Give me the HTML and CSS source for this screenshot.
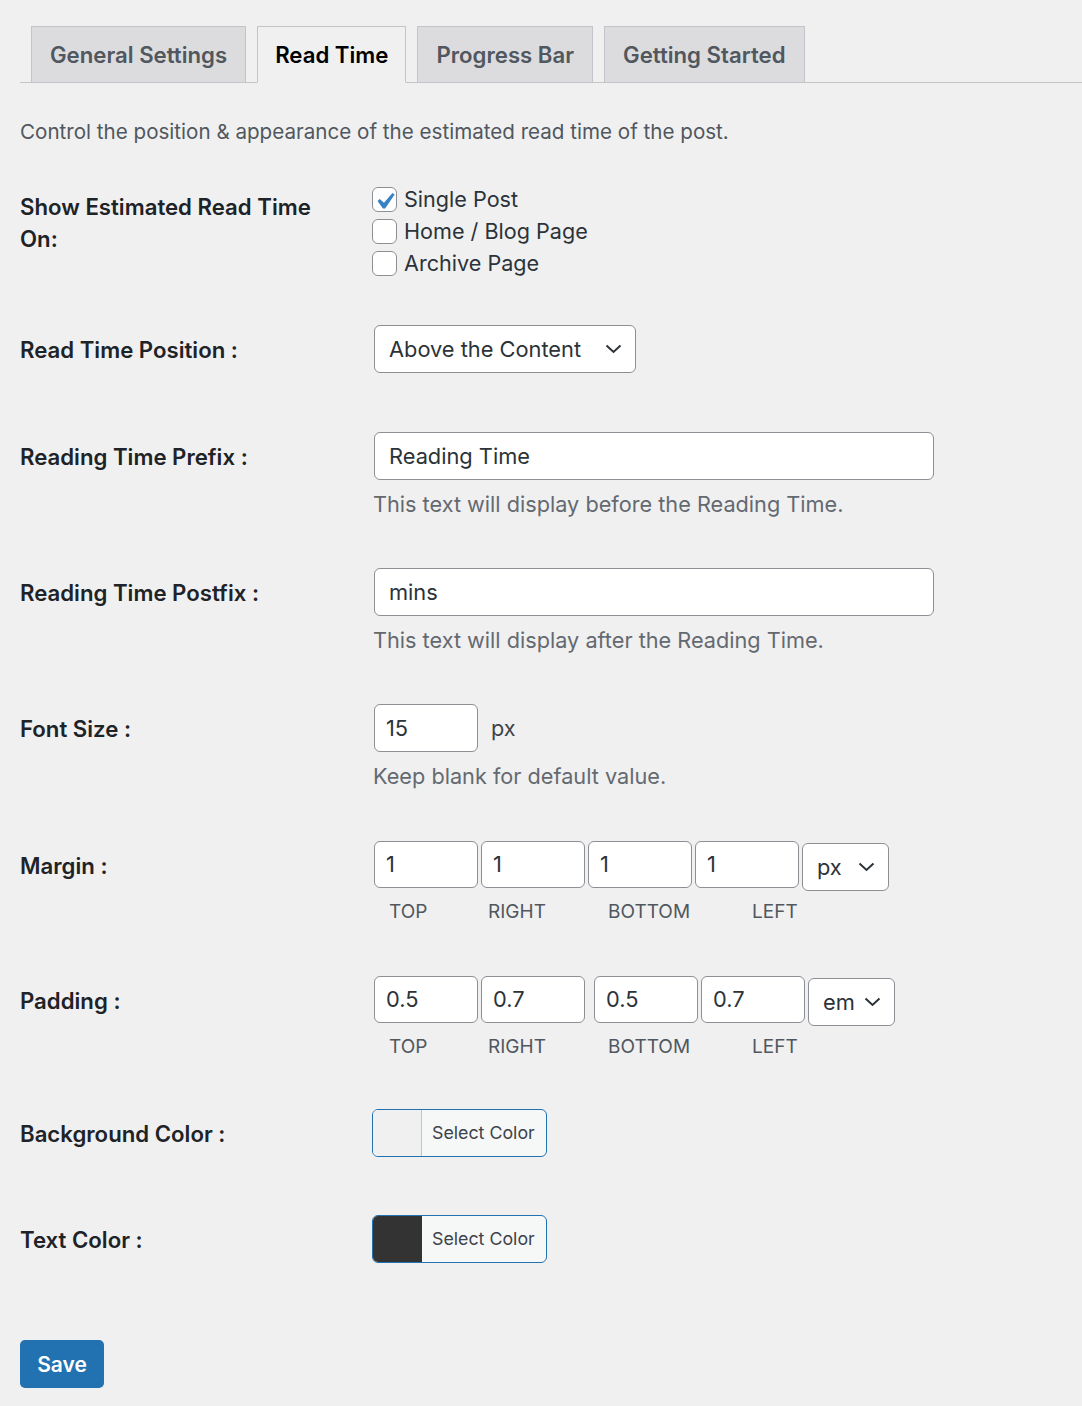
FILE: index.html
```html
<!DOCTYPE html>
<html lang="en">
<head>
<meta charset="utf-8">
<title>Read Time Settings</title>
<link rel="stylesheet" href="styles.css">
</head>
<body>
<div class="wrap">
  <nav class="tabs">
    <a class="tab">General Settings</a>
    <a class="tab active">Read Time</a>
    <a class="tab">Progress Bar</a>
    <a class="tab">Getting Started</a>
  </nav>

  <p class="intro">Control the position &amp; appearance of the estimated read time of the post.</p>

  <div class="form">
    <div class="row row-first">
      <div class="label label-multi">Show Estimated Read Time On:</div>
      <div class="field checks">
        <label class="check"><span class="box"><svg class="tick" viewBox="0 0 20 20"><path d="M14.83 4.89l1.34.94-5.81 8.38H9.02L5.78 9.67l1.34-1.25 2.57 2.4z" fill="#3582c4"/></svg></span>Single Post</label>
        <label class="check"><span class="box"></span>Home / Blog Page</label>
        <label class="check"><span class="box"></span>Archive Page</label>
      </div>
    </div>

    <div class="row row-loose">
      <div class="label">Read Time Position :</div>
      <div class="field">
        <div class="select select-wide">
          <span>Above the Content</span>
          <svg class="chev" viewBox="0 0 17 10"><polyline points="1.5,1.5 8.5,8 15.5,1.5" fill="none" stroke="#2c3338" stroke-width="2"/></svg>
        </div>
      </div>
    </div>

    <div class="row">
      <div class="label">Reading Time Prefix :</div>
      <div class="field">
        <div class="input input-wide">Reading Time</div>
        <p class="desc">This text will display before the Reading Time.</p>
      </div>
    </div>

    <div class="row">
      <div class="label">Reading Time Postfix :</div>
      <div class="field">
        <div class="input input-wide">mins</div>
        <p class="desc">This text will display after the Reading Time.</p>
      </div>
    </div>

    <div class="row row-wide">
      <div class="label">Font Size :</div>
      <div class="field">
        <div class="inline">
          <div class="input input-num">15</div>
          <span class="unit">px</span>
        </div>
        <p class="desc">Keep blank for default value.</p>
      </div>
    </div>

    <div class="row">
      <div class="label">Margin :</div>
      <div class="field">
        <div class="quad">
          <div class="input input-small">1</div>
          <div class="input input-small">1</div>
          <div class="input input-small">1</div>
          <div class="input input-small">1</div>
          <div class="select select-unit">
            <span>px</span>
            <svg class="chev" viewBox="0 0 17 10"><polyline points="1.5,1.5 8.5,8 15.5,1.5" fill="none" stroke="#2c3338" stroke-width="2"/></svg>
          </div>
        </div>
        <div class="sides">
          <span class="side side-top">TOP</span><span class="side side-right">RIGHT</span><span class="side side-bottom">BOTTOM</span><span class="side">LEFT</span>
        </div>
      </div>
    </div>

    <div class="row row-tight">
      <div class="label">Padding :</div>
      <div class="field">
        <div class="quad">
          <div class="input input-small">0.5</div>
          <div class="input input-small">0.7</div>
          <div class="input input-small input-shift">0.5</div>
          <div class="input input-small">0.7</div>
          <div class="select select-unit">
            <span>em</span>
            <svg class="chev" viewBox="0 0 17 10"><polyline points="1.5,1.5 8.5,8 15.5,1.5" fill="none" stroke="#2c3338" stroke-width="2"/></svg>
          </div>
        </div>
        <div class="sides">
          <span class="side side-top">TOP</span><span class="side side-right">RIGHT</span><span class="side side-bottom">BOTTOM</span><span class="side">LEFT</span>
        </div>
      </div>
    </div>

    <div class="row row-color">
      <div class="label">Background Color :</div>
      <div class="field field-shift">
        <div class="color-btn">
          <span class="swatch swatch-light"></span>
          <span class="color-text">Select Color</span>
        </div>
      </div>
    </div>

    <div class="row row-last">
      <div class="label">Text Color :</div>
      <div class="field field-shift">
        <div class="color-btn">
          <span class="swatch swatch-dark"></span>
          <span class="color-text">Select Color</span>
        </div>
      </div>
    </div>
  </div>

  <button class="save" type="button">Save</button>
</div>
</body>
</html>
```

FILE: styles.css
```css
* { box-sizing: border-box; }

html, body {
  margin: 0;
  padding: 0;
  background: #f0f0f1;
}

body {
  font-family: "Inter", "Noto Sans", "Liberation Sans", sans-serif;
  color: #3c434a;
  min-height: 1406px;
}

.wrap {
  padding: 26px 0 0 20px;
}

/* Tabs */
.tabs {
  display: flex;
  align-items: flex-end;
  gap: 11px;
  padding-left: 11px;
  border-bottom: 1px solid #c3c4c7;
}

.tab {
  display: block;
  height: 57px;
  margin-bottom: -1px;
  padding: 0 18px;
  border: 1px solid #c3c4c7;
  background: #dcdcde;
  color: #50575e;
  font-size: 22.2px;
  font-weight: 600;
  line-height: 55px;
  white-space: nowrap;
}

.tab.active {
  padding: 0 17px;
  background: #f0f0f1;
  border-bottom-color: #f0f0f1;
  color: #000;
}

.intro {
  margin: 35px 0 0;
  font-size: 20.6px;
  line-height: 28px;
  color: #50575e;
}

/* Form */
.form {
  margin-top: 37px;
  display: flex;
  flex-direction: column;
}

.row {
  display: flex;
  align-items: flex-start;
  margin-bottom: 50px;
}

.row-first { margin-bottom: 46px; }
.row-wide { margin-bottom: 51px; }
.row-tight { margin-bottom: 48px; }
.row-loose { margin-bottom: 59px; }
.row-color { margin-bottom: 58px; }
.row-last { margin-bottom: 77px; }

.label {
  flex: 0 0 354px;
  padding-top: 2px;
  padding-right: 40px;
  font-size: 22.2px;
  font-weight: 600;
  color: #1d2327;
  line-height: 46px;
}

.label-multi {
  padding-top: 8px;
  line-height: 32px;
}

.field {
  display: flex;
  flex-direction: column;
  align-items: flex-start;
}

.field-shift { margin-left: -2px; }

/* Checkboxes */
.checks { margin-left: -2px; }

.check {
  display: flex;
  align-items: center;
  height: 32px;
  gap: 7px;
  font-size: 21.6px;
  color: #2c3338;
}

.box {
  position: relative;
  flex: 0 0 25px;
  width: 25px;
  height: 25px;
  border: 1px solid #8c8f94;
  border-radius: 6px;
  background: #fff;
}

.tick {
  position: absolute;
  left: -5px;
  top: -3px;
  width: 33px;
  height: 33px;
}

/* Inputs */
.input {
  height: 48px;
  border: 1px solid #8c8f94;
  border-radius: 6px;
  background: #fff;
  color: #2c3338;
  font-size: 21.8px;
  line-height: 46px;
  padding: 0 14px;
  white-space: nowrap;
}

.input-wide { width: 560px; }

.input-num {
  width: 104px;
  padding: 0 11px;
}

.input-small {
  width: 104px;
  padding: 0 11px;
  height: 47px;
  line-height: 45px;
}

.input-shift { margin-left: 6px; }

.select {
  display: flex;
  align-items: center;
  justify-content: space-between;
  height: 48px;
  border: 1px solid #8c8f94;
  border-radius: 6px;
  background: #fff;
  color: #2c3338;
  font-size: 21.8px;
  padding: 0 13px 0 14px;
  white-space: nowrap;
}

.select-wide { width: 262px; }

.select-unit {
  width: 87px;
  margin-top: 2px;
  padding-left: 14px;
}

.chev {
  width: 17px;
  height: 10px;
  flex: 0 0 17px;
}

.desc {
  margin: 10px 0 0 -1px;
  font-size: 21.7px;
  line-height: 28px;
  color: #646970;
}

.inline {
  display: flex;
  align-items: center;
  gap: 13px;
}

.unit {
  font-size: 21.7px;
  color: #3c434a;
}

.quad {
  display: flex;
  align-items: flex-start;
  gap: 3px;
}

.sides {
  display: flex;
  margin-top: 7px;
  padding-left: 15px;
  font-size: 19px;
  line-height: 28px;
  color: #50575e;
}

.side-top { width: 99px; }
.side-right { width: 120px; }
.side-bottom { width: 144px; }

/* Color buttons */
.color-btn {
  display: flex;
  align-items: stretch;
  width: 175px;
  height: 48px;
  border: 1px solid #2271b1;
  border-radius: 6px;
  background: #f6f7f7;
  overflow: hidden;
}

.swatch {
  flex: 0 0 49px;
  border-right: 1px solid #c3c4c7;
}

.swatch-light { background: #f0f0f1; }
.swatch-dark { background: #333333; border-right-color: #333333; }

.color-text {
  padding-left: 10px;
  font-size: 17.8px;
  line-height: 46px;
  color: #3c434a;
  white-space: nowrap;
}

/* Save */
.save {
  display: block;
  width: 84px;
  height: 48px;
  border: none;
  border-radius: 5px;
  background: #2271b1;
  color: #fff;
  font-family: inherit;
  font-size: 21px;
  font-weight: 600;
  padding: 0;
}
```
